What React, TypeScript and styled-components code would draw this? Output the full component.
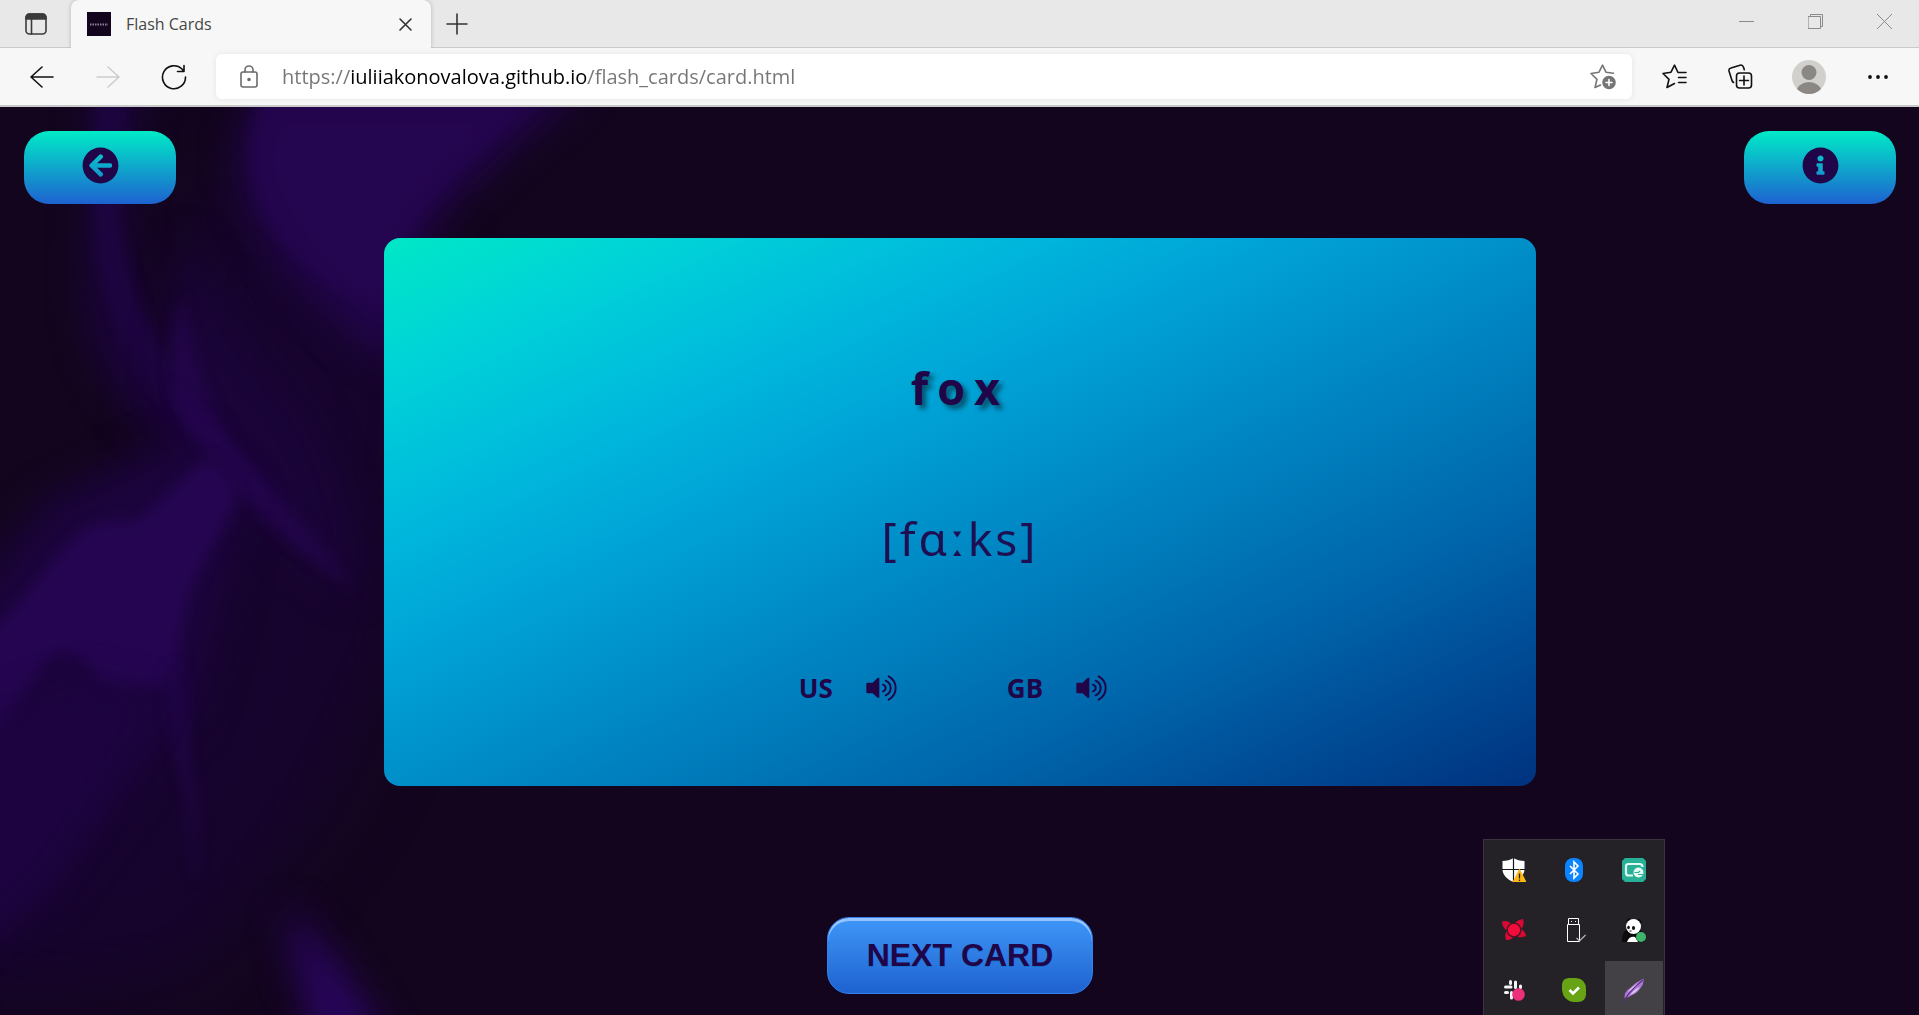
import React from "react";
import styled, { createGlobalStyle } from "styled-components";
import { FaArrowCircleLeft, FaInfoCircle } from "react-icons/fa";

const ink = "#210549";
const uiFont = `"Open Sans", "Noto Sans", sans-serif`;

const GlobalStyle = createGlobalStyle`
  *, *::before, *::after { box-sizing: border-box; }
  body {
    margin: 0;
    background: #13051e;
    font-family: ${uiFont};
    overflow: hidden;
  }
  button {
    font: inherit;
    color: inherit;
    background: none;
    border: 0;
    padding: 0;
    cursor: pointer;
  }
  svg { display: block; }
`;

const Window = styled.div`
  position: relative;
  display: flex;
  flex-direction: column;
  min-height: 100vh;
  overflow: hidden;
`;

/* ---------- browser chrome ---------- */

const TabStrip = styled.div`
  display: flex;
  align-items: stretch;
  height: 48px;
  background: #e8e8e8;
  box-shadow: inset 0 -1px 0 #cbcbcb;
`;

const ChromeButton = styled.button<{ $width: number }>`
  display: flex;
  flex: none;
  align-items: center;
  justify-content: center;
  width: ${(p) => p.$width}px;
`;

const Tab = styled.div`
  display: flex;
  align-items: center;
  width: 360px;
  padding: 0 19px 0 16px;
  gap: 15px;
  background: #f7f7f7;
  border-radius: 8px 8px 0 0;
  box-shadow: 0 0 4px rgba(0, 0, 0, 0.22);
  clip-path: inset(0 -6px 0 -6px);
`;

const Favicon = styled.span`
  display: flex;
  width: 24px;
  height: 24px;
  align-items: center;
  justify-content: center;
  background: #14051f;
`;

const TabTitle = styled.span`
  flex: 1;
  color: #454545;
  font-size: 16px;
  line-height: 24px;
`;

const WindowControls = styled.div`
  display: flex;
  align-items: stretch;
  height: 43px;
  margin-left: auto;
`;

const Toolbar = styled.div`
  display: flex;
  align-items: center;
  height: 59px;
  padding: 0 8px 0 9px;
  gap: 9px;
  background: #f7f7f7;
  border-bottom: 2px solid #c9c9c9;
`;

const ToolGroup = styled.div`
  display: flex;
  height: 45px;
`;

const AddressBar = styled.label`
  display: flex;
  flex: 1;
  align-items: center;
  height: 45px;
  padding: 0 16px 0 24px;
  gap: 24px;
  background: #fff;
  border-radius: 6px;
  box-shadow: 0 0 6px rgba(0, 0, 0, 0.08);
`;

const AddressInput = styled.input`
  flex: 1;
  min-width: 0;
  height: 32px;
  padding: 0;
  border: 0;
  outline: 0;
  font-family: ${uiFont};
  font-size: 20px;
  line-height: 32px;
  color: transparent;
  caret-color: #000;
  background: linear-gradient(90deg, #757575 69px, #000 69px, #000 306px, #757575 306px);
  background-clip: text;
  -webkit-background-clip: text;
`;

/* ---------- flash card page ---------- */

const Page = styled.main`
  position: relative;
  display: flex;
  flex: 1;
  flex-direction: column;
  align-items: center;
  padding: 24px 23px 21px 24px;
  color: ${ink};
`;

const Backdrop = styled.svg`
  position: absolute;
  inset: 0;
  z-index: -1;
`;

const TopNav = styled.nav`
  display: flex;
  justify-content: space-between;
  align-self: stretch;
`;

const NavButton = styled.button`
  display: flex;
  align-items: center;
  justify-content: center;
  width: 152px;
  height: 73px;
  padding-bottom: 4px;
  border-radius: 25px;
  background: linear-gradient(#00ebc7, #1e62d0);
  font-size: 37px;
`;

const Card = styled.section`
  display: flex;
  flex-direction: column;
  align-items: center;
  width: 60vw;
  margin-top: 34px;
  padding: 118px 24px 78px;
  border-radius: 16px;
  background: linear-gradient(
    to bottom right,
    #00e8c6 0%,
    #00d2d8 13%,
    #00badc 26%,
    #00a4d7 38%,
    #008fc9 50%,
    #0079b9 63%,
    #0062a8 76%,
    #004993 88%,
    #00327f 100%
  );
`;

const Word = styled.h1`
  margin: 0;
  font-size: 45px;
  line-height: 64px;
  font-weight: 700;
  letter-spacing: 9px;
  text-shadow: 4px 4px 5px rgba(0, 0, 0, 0.5);
`;

const Transcription = styled.p`
  margin: 86px 0 0;
  font-family: "Noto Sans", "Open Sans", sans-serif;
  font-size: 46px;
  line-height: 64px;
  font-weight: 400;
  letter-spacing: 3px;
  opacity: 0.92;
`;

const Voices = styled.div`
  display: flex;
  gap: 110px;
  margin-top: 98px;
  padding-right: 14px;
`;

const Voice = styled.button`
  display: flex;
  align-items: center;
  gap: 33px;
  font-size: 26px;
  line-height: 40px;
  font-weight: 700;
`;

const NextButton = styled.button`
  width: 266px;
  height: 77px;
  margin-top: auto;
  border: 1px solid #337fed;
  border-radius: 22px;
  background: linear-gradient(#3d94f6 5%, #1e62d0 100%);
  box-shadow: inset 0 3px 0 #97c4fe;
  color: ${ink};
  font-family: "Liberation Sans", Arial, sans-serif;
  font-size: 32px;
  font-weight: 700;
  text-shadow: 0 1px 0 #1570cd;
`;

/* ---------- notification tray ---------- */

const Tray = styled.aside`
  position: absolute;
  right: 254px;
  bottom: -6px;
  display: grid;
  grid-template-columns: repeat(3, 58px);
  grid-auto-rows: 58px;
  gap: 2px;
  padding: 1px;
  border: 1px solid #39343f;
  background: #242226;
`;

const TrayButton = styled.button<{ $active?: boolean }>`
  display: flex;
  align-items: center;
  justify-content: center;
  background: ${(p) => (p.$active ? "#434146" : "transparent")};
`;

/* ---------- icons ---------- */

type LineIconProps = {
  w: number;
  h: number;
  color?: string;
  stroke?: number;
  children: React.ReactNode;
};

const LineIcon = ({ w, h, color = "#111", stroke = 1.6, children }: LineIconProps) => (
  <svg
    width={w}
    height={h}
    viewBox={`0 0 ${w} ${h}`}
    fill="none"
    stroke={color}
    strokeWidth={stroke}
    strokeLinecap="round"
    strokeLinejoin="round"
    aria-hidden="true"
  >
    {children}
  </svg>
);

const TabActionsIcon = () => (
  <LineIcon w={22} h={22} color="#3b3b3b">
    <rect x="1" y="1" width="20" height="20" rx="3.5" />
    <path d="M1 4.5A3.5 3.5 0 0 1 4.500 1h13A3.500 3.500 0 0 1 21 4.500V6H1z" fill="#3b3b3b" />
    <path d="M6.500 6v15" />
  </LineIcon>
);

const StarPath =
  "M23.500 9.200l-7.500-1L12.500 1.200 9 8.200 1 9.500l6 5.800L5 23.500l5.500-2.500";

const SpeakerIcon = () => (
  <svg width="31" height="26" viewBox="0 0 93 78" aria-hidden="true">
    <path
      d="M5 23h15L33 10.500Q36 8 40 8.500v60q-4 .5-7-2L20 55H5q-4 0-4-4V27q0-4 4-4z"
      fill={ink}
    />
    <g fill="none" stroke={ink} strokeWidth="5.800" strokeLinecap="round">
      <path d="M51 29q8 3 8 10t-8 10" />
      <path d="M59 17q15 7 15 22t-15 22" />
      <path d="M68 4q21 12 21 35T68 74" />
    </g>
  </svg>
);

const ShieldIcon = () => (
  <svg width="24" height="24" viewBox="0 0 24 24" aria-hidden="true">
    <path d="M11.500 0c3 2 7 3 11 3v8c0 6-5 10.500-11 13C5 21.500.5 17 .5 11V3c4 0 8-1 11-3z" fill="#fff" />
    <path d="M11.500 0v24M0 11.500h23" stroke="#17161a" strokeWidth="1.200" />
    <path d="M17.500 10.500L24.500 24h-14z" fill="#fdb813" />
    <path d="M17.500 15.500v5M17.500 21.500v1.400" stroke="#222" strokeWidth="1.300" />
  </svg>
);

const BluetoothIcon = () => (
  <svg width="24" height="24" viewBox="0 0 24 24" aria-hidden="true">
    <rect x="3" y="0" width="18" height="24" rx="8" fill="#0a84ff" />
    <path d="M8 8l8 8-4 4V4l4 4-8 8" fill="none" stroke="#fff" strokeWidth="1.600" />
  </svg>
);

const ScreenIcon = () => (
  <svg width="24" height="24" viewBox="0 0 24 24" aria-hidden="true">
    <path d="M3 0h18l3 3v18l-3 3H3l-3-3V3z" fill="#27b095" />
    <path d="M11 17.500H6.500q-2.500 0-2.500-2.500V8.500Q4 6 6.500 6h11Q20.500 6 20.500 9" fill="none" stroke="#e4faf5" strokeWidth="2.200" />
    <circle cx="16.500" cy="14.500" r="5" fill="#e4faf5" />
    <path d="M12.500 14.500h4l1.500-1.500M16 16.500h5" fill="none" stroke="#27b095" strokeWidth="1.200" />
  </svg>
);

const RedStarIcon = () => (
  <svg width="24" height="24" viewBox="0 0 24 24" aria-hidden="true">
    <g fill="#d60a35">
      <path d="M0 3.500q6-2 9 2.500l-5 6Q0 9 0 3.500z" />
      <path d="M21 1q2 6-2 10l-6-6q3-3.500 8-4z" />
      <path d="M24 18q-5 2-8 1l3-8q4 2 5 7z" />
      <path d="M4 22q-2-6 1-9l6 7q-3 2.500-7 2z" />
    </g>
    <circle cx="12" cy="12" r="6.800" fill="#f20d3c" stroke="#4a1422" strokeWidth="1.300" />
  </svg>
);

const UsbIcon = () => (
  <svg width="24" height="24" viewBox="0 0 24 24" fill="none" stroke="#fff" aria-hidden="true">
    <path d="M6.500 6.500v-6h10v6M5.500 6.500h12v17h-12z" />
    <path d="M9 3.500h1M13 3.500h1" />
    <path d="M14.500 20l3 3 6-6" stroke="#bbb" strokeWidth="1.200" />
  </svg>
);

const PandaIcon = () => (
  <svg width="24" height="24" viewBox="0 0 24 24" aria-hidden="true">
    <path d="M4 12h14q5 3 4 12H0Q0 15 4 12z" fill="#0b0b0b" />
    <circle cx="7" cy="3" r="2.500" fill="#0b0b0b" />
    <circle cx="17" cy="3.500" r="2.500" fill="#0b0b0b" />
    <ellipse cx="11.500" cy="8.500" rx="7.500" ry="7.500" fill="#fff" />
    <ellipse cx="6.500" cy="9.500" rx="1.300" ry="1.800" fill="#111" />
    <ellipse cx="11.500" cy="10" rx="1.600" ry="1.900" fill="#111" />
    <path d="M7.500 13h2" stroke="#111" />
    <path d="M5 24q2-6 8-5l3 5z" fill="#fff" />
    <circle cx="19" cy="19" r="5" fill="#3fb56b" />
  </svg>
);

const HashIcon = () => (
  <svg width="24" height="24" viewBox="0 0 24 24" fill="none" aria-hidden="true">
    <g stroke="#f4f4f4" strokeWidth="3" strokeLinecap="round">
      <path d="M8.500 3.500v2M3.500 9h5.500M13.500 4v5.500M18.500 8v1.500M3.500 14.500h2M9.500 14.500v5.500" />
    </g>
    <circle cx="16.500" cy="16.500" r="6.300" fill="#ec3079" />
  </svg>
);

const CheckIcon = () => (
  <svg width="24" height="24" viewBox="0 0 24 24" aria-hidden="true">
    <path d="M7 0h7q10 1 10 11v6q-1 7-8 7h-5Q1 22 0 12V6q1-6 7-6z" fill="#67a314" />
    <path d="M7.500 12l3.500 3.500 6-6" fill="none" stroke="#fff" strokeWidth="2.600" />
  </svg>
);

const FeatherIcon = () => (
  <svg width="24" height="24" viewBox="0 0 24 24" aria-hidden="true">
    <path d="M2.500 20Q2 14 8 10q6-6 13.500-9.500.5 6-3 9.500-3 5-8 7-4 2.500-8 3z" fill="#a978d2" />
    <path d="M6 14q3-5 12-10-3 6-12 10zM8 17q7-3 10-8-6 2-10 8z" fill="#ddc4ee" />
    <path d="M2 23.500Q6 14 21 2" fill="none" stroke="#5f2c8d" strokeWidth="1.200" />
  </svg>
);

const trayItems = [
  { name: "Security", Icon: ShieldIcon },
  { name: "Bluetooth", Icon: BluetoothIcon },
  { name: "Screen capture", Icon: ScreenIcon },
  { name: "Updater", Icon: RedStarIcon },
  { name: "Eject device", Icon: UsbIcon },
  { name: "Panda", Icon: PandaIcon },
  { name: "Chat", Icon: HashIcon },
  { name: "Status", Icon: CheckIcon },
  { name: "Feather", Icon: FeatherIcon, active: true },
];

const blurs = [
  { id: "soft", size: 7 },
  { id: "softer", size: 18 },
  { id: "haze", size: 40 },
];

const SmokeBackdrop = () => (
  <Backdrop width="800" height="908" viewBox="0 0 800 908" aria-hidden="true">
    <defs>
      {blurs.map(({ id, size }) => (
        <filter
          key={id}
          id={id}
          x="-50%"
          y="-50%"
          width="200%"
          height="200%"
          colorInterpolationFilters="sRGB"
        >
          <feGaussianBlur stdDeviation={size} />
        </filter>
      ))}
    </defs>
    <path d="M190 80L420 160 400 520 330 680 200 860-40 900-40 620 190 560z" fill="#17042e" filter="url(#haze)" />
    <path d="M85 -20C115 60 50 200 120 290L205 370 215 300C140 250 120 160 130 60L145-20z" fill="#1b043a" filter="url(#softer)" />
    <path d="M96 -20L93 100Q96 190 145 265L205 350 200 290Q125 210 118 100L125-20z" fill="#1f0546" filter="url(#soft)" opacity="0.7" />
    <path d="M262 -20Q215 50 262 125 305 200 400 260L425 130Q480 60 590-20z" fill="#210549" filter="url(#softer)" />
    <path d="M268 -20Q235 50 268 115 306 170 390 210L405 130Q450 60 555-20z" fill="#250551" filter="url(#soft)" opacity="0.75" />
    <path d="M185 130Q230 220 300 300 350 380 355 490L260 415Q150 300 170 220z" fill="#1a0438" filter="url(#softer)" />
    <path d="M182 190Q160 270 185 310 220 390 355 482 290 400 240 345 205 310 182 190z" fill="#220549" filter="url(#soft)" />
    <path d="M170 275Q185 320 208 348L245 390 270 395Q240 350 205 315z" fill="#270554" filter="url(#soft)" opacity="0.8" />
    <path d="M40 400Q120 350 195 330L250 390 200 600Q110 700 50 790L-40 860-40 500z" fill="#1b043c" filter="url(#softer)" />
    <path d="M-20 540L57 450Q90 405 135 415L175 380 205 350 237 375 235 400 210 445Q180 490 178 565L160 580 100 575Q75 530 45 555L-20 650z" fill="#250551" filter="url(#soft)" />
    <path d="M166 560Q172 640 186 690L196 780Q198 700 190 650L184 560z" fill="#200547" filter="url(#soft)" opacity="0.9" />
    <path d="M-40 620L80 570 160 590Q90 700 50 760L-40 850z" fill="#1e0443" filter="url(#softer)" opacity="0.7" />
    <path d="M285 800Q325 830 390 940L320 940Q295 870 285 800z" fill="#290560" filter="url(#softer)" />
  </Backdrop>
);

const voices = ["US", "GB"];

export default function App() {
  return (
    <Window>
      <GlobalStyle />
      <TabStrip>
        <ChromeButton $width={71} aria-label="Tab actions">
          <TabActionsIcon />
        </ChromeButton>
        <Tab>
          <Favicon>
            <svg width="18" height="3" viewBox="0 0 18 3" aria-hidden="true">
              <path d="M0 1.500h18" stroke="#8a8094" strokeWidth="2" strokeDasharray="1.500 1" />
            </svg>
          </Favicon>
          <TabTitle>Flash Cards</TabTitle>
          <button aria-label="Close tab">
            <LineIcon w={13} h={13} color="#333">
              <path d="M1 1l11 11M12 1L1 12" />
            </LineIcon>
          </button>
        </Tab>
        <ChromeButton $width={52} aria-label="New tab">
          <LineIcon w={22} h={22} color="#333">
            <path d="M11 1v20M1 11h20" />
          </LineIcon>
        </ChromeButton>
        <WindowControls>
          <ChromeButton $width={69} aria-label="Minimize">
            <LineIcon w={15} h={15} color="#8a8a8a" stroke={1}>
              <path d="M0 7.500h15" />
            </LineIcon>
          </ChromeButton>
          <ChromeButton $width={69} aria-label="Restore">
            <LineIcon w={15} h={15} color="#8a8a8a" stroke={1}>
              <path d="M.5 2.500h12v12H.5zM2.500 2.500v-2h12v12h-2" />
            </LineIcon>
          </ChromeButton>
          <ChromeButton $width={69} aria-label="Close window">
            <LineIcon w={15} h={15} color="#8a8a8a" stroke={1}>
              <path d="M0 0l15 15M15 0L0 15" />
            </LineIcon>
          </ChromeButton>
        </WindowControls>
      </TabStrip>

      <Toolbar>
        <ToolGroup>
          <ChromeButton $width={66} aria-label="Back">
            <LineIcon w={24} h={22}>
              <path d="M23 11H1M12 1L1 11l11 10" />
            </LineIcon>
          </ChromeButton>
          <ChromeButton $width={66} aria-label="Forward">
            <LineIcon w={24} h={22} color="#cdcdcd">
              <path d="M1 11h22M12 1l11 10-11 10" />
            </LineIcon>
          </ChromeButton>
          <ChromeButton $width={66} aria-label="Refresh">
            <LineIcon w={26} h={26}>
              <path d="M24.500 13A11.500 11.500 0 1 1 21 5l2 2.500M23 1.500v6h-6.500" />
            </LineIcon>
          </ChromeButton>
        </ToolGroup>
        <AddressBar>
          <LineIcon w={18} h={23} color="#6b6b6b">
            <rect x="1" y="7" width="16" height="15" rx="2" />
            <path d="M5 7V5a4 4 0 0 1 8 0v2" />
            <circle cx="9" cy="14.500" r="1" fill="#6b6b6b" />
          </LineIcon>
          <AddressInput
            aria-label="Address"
            defaultValue="https://iuliiakonovalova.github.io/flash_cards/card.html"
            spellCheck={false}
          />
          <button aria-label="Add to favorites">
            <LineIcon w={26} h={26} color="#757575">
              <path d={StarPath} />
              <circle cx="19" cy="18.500" r="6" fill="#757575" stroke="#757575" />
              <path d="M19 15.500v6M16 18.500h6" stroke="#fff" />
            </LineIcon>
          </button>
        </AddressBar>
        <ToolGroup>
          <ChromeButton $width={66} aria-label="Favorites">
            <LineIcon w={25} h={25}>
              <path d="M24 8.500h-8L12.500 1.200 9 8.200 1 9.500l6 5.800L5 23.500l7.500-4" />
              <path d="M16.500 13.500H24M16.500 18.500H24" />
            </LineIcon>
          </ChromeButton>
          <ChromeButton $width={66} aria-label="Collections">
            <LineIcon w={25} h={25}>
              <rect x="8.500" y="9" width="15" height="15" rx="3" />
              <path d="M16 12v9M11.500 16.500h9" />
              <path d="M5.500 18.500q-1.500-1-2-3.500L1 7q-.5-2.500 2-3L12 1.200q2.500-.7 3.500 2l.8 2.500" />
            </LineIcon>
          </ChromeButton>
          <ChromeButton $width={72} aria-label="Profile">
            <svg width="34" height="34" viewBox="0 0 34 34" aria-hidden="true">
              <defs>
                <clipPath id="avatar">
                  <circle cx="17" cy="17" r="17" />
                </clipPath>
              </defs>
              <g clipPath="url(#avatar)">
                <rect width="34" height="34" fill="#d2d0cd" />
                <circle cx="17" cy="12.500" r="7.500" fill="#8b8784" />
                <ellipse cx="17" cy="32" rx="12.500" ry="10" fill="#8b8784" />
              </g>
            </svg>
          </ChromeButton>
          <ChromeButton $width={66} aria-label="Settings and more">
            <svg width="20" height="4" viewBox="0 0 20 4" fill="#111" aria-hidden="true">
              <circle cx="2" cy="2" r="1.900" />
              <circle cx="10" cy="2" r="1.900" />
              <circle cx="18" cy="2" r="1.900" />
            </svg>
          </ChromeButton>
        </ToolGroup>
      </Toolbar>

      <Page>
        <SmokeBackdrop />
        <TopNav>
          <NavButton aria-label="Back to start">
            <FaArrowCircleLeft />
          </NavButton>
          <NavButton aria-label="Information">
            <FaInfoCircle />
          </NavButton>
        </TopNav>
        <Card>
          <Word>fox</Word>
          <Transcription>[fɑːks]</Transcription>
          <Voices>
            {voices.map((voice) => (
              <Voice key={voice}>
                {voice}
                <SpeakerIcon />
              </Voice>
            ))}
          </Voices>
        </Card>
        <NextButton>NEXT CARD</NextButton>
      </Page>

      <Tray>
        {trayItems.map(({ name, Icon, active }) => (
          <TrayButton key={name} $active={active} aria-label={name}>
            <Icon />
          </TrayButton>
        ))}
      </Tray>
    </Window>
  );
}
